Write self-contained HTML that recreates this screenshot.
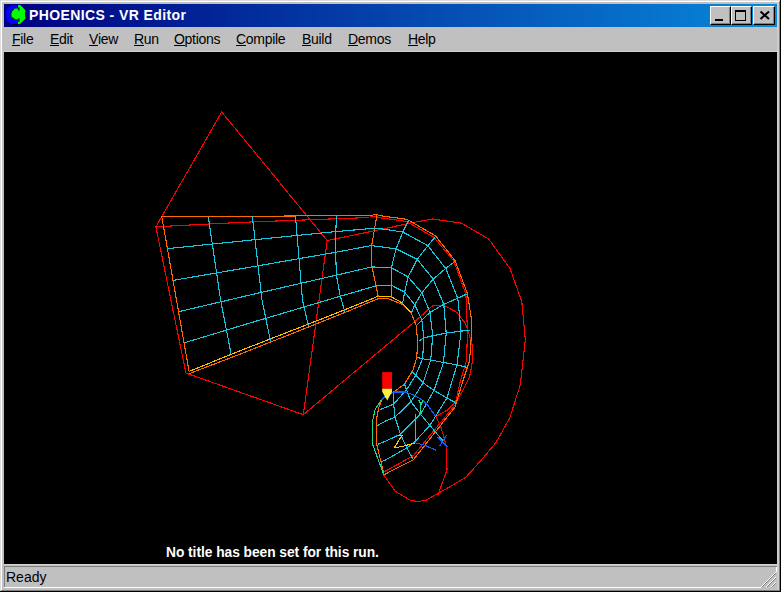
<!DOCTYPE html>
<html><head><meta charset="utf-8">
<style>
*{margin:0;padding:0;box-sizing:border-box}
html,body{width:781px;height:592px;overflow:hidden;background:#c0c0c0;font-family:"Liberation Sans",sans-serif}
.win{position:absolute;left:0;top:0;width:781px;height:592px;background:#c0c0c0}
.fr{position:absolute}
#title{position:absolute;left:4px;top:4px;width:773px;height:23px;background:linear-gradient(to right,#000080,#0888dc)}
#ttext{position:absolute;left:25px;top:4px;color:#fff;font-weight:bold;font-size:14px;letter-spacing:0.4px;line-height:14px;white-space:nowrap}
.menu{position:absolute;top:32px;font-size:14px;letter-spacing:-0.3px;line-height:14px;color:#000;white-space:nowrap}
.menu u{text-decoration:none;position:relative}
.menu u:after{content:"";position:absolute;left:0;right:0;top:14px;height:1px;background:#000}
#canvas{position:absolute;left:4px;top:52px;width:773px;height:512px;background:#000}
#msg{position:absolute;left:166px;top:546px;color:#fff;font-weight:bold;font-size:13.8px;letter-spacing:-0.05px;line-height:14px;white-space:nowrap}
#ready{position:absolute;left:6px;top:570px;font-size:14px;line-height:14px;white-space:nowrap;color:#000}
.btn{position:absolute;top:6px;height:18px;background:#c0c0c0;border-top:1px solid #fff;border-left:1px solid #fff;border-right:1px solid #000;border-bottom:1px solid #000;box-shadow:inset -1px -1px 0 #808080}
</style></head><body>
<div class="win">
  <div class="fr" style="left:0;top:0;width:781px;height:1px;background:#dcdcdc"></div>
  <div class="fr" style="left:0;top:0;width:1px;height:592px;background:#dcdcdc"></div>
  <div class="fr" style="left:1px;top:1px;width:778px;height:1px;background:#fff"></div>
  <div class="fr" style="left:1px;top:1px;width:1px;height:589px;background:#fff"></div>
  <div class="fr" style="left:777px;top:2px;width:2px;height:588px;background:#cccccc"></div>
  <div class="fr" style="left:779px;top:1px;width:1px;height:590px;background:#808080"></div>
  <div class="fr" style="left:1px;top:590px;width:779px;height:1px;background:#808080"></div>
  <div class="fr" style="left:780px;top:0;width:1px;height:592px;background:#000"></div>
  <div class="fr" style="left:0;top:591px;width:781px;height:1px;background:#000"></div>
  <div id="title">
    <svg width="24" height="24" viewBox="0 0 592 592" style="position:absolute;left:0;top:0">
      <polygon points="180,30 335,30 345,110 250,120 195,160 165,230 165,300 190,340 250,370 345,380 340,495 190,495 130,450 80,400 45,330 45,200 60,150 90,90" fill="#0000ff"/>
      <polygon points="345,25 400,25 470,90 520,150 535,200 540,330 520,370 470,420 400,490 345,500 345,440 375,390 345,380 250,370 190,340 165,300 165,230 195,160 250,120 345,110 375,150 345,60" fill="#00ff00"/>
      <polyline points="250,128 198,165 170,230 170,300 195,336 250,364" fill="none" stroke="#000" stroke-width="24"/>
      <path d="M368,85 L368,160 M368,350 L368,440 M220,505 L330,505 M300,35 L345,35 M530,200 L540,330" stroke="#000" stroke-width="26" fill="none"/>
    </svg>
    <div id="ttext">PHOENICS - VR Editor</div>
    <div class="btn" style="left:706px;width:21px;top:2px;height:19px">
      <div style="position:absolute;left:4px;top:12px;width:8px;height:2px;background:#000"></div>
    </div>
    <div class="btn" style="left:727px;width:21px;top:2px;height:19px">
      <div style="position:absolute;left:3px;top:3px;width:11px;height:11px;border:1px solid #000;border-top:2px solid #000"></div>
    </div>
    <div class="btn" style="left:749px;width:22px;top:2px;height:19px">
      <svg width="20" height="16" style="position:absolute;left:0;top:0"><path d="M6.5,4.5 L15,12 M15,4.5 L6.5,12" stroke="#000" stroke-width="2" fill="none"/></svg>
    </div>
  </div>
  <div class="menu" style="left:12px"><u>F</u>ile</div>
  <div class="menu" style="left:50px"><u>E</u>dit</div>
  <div class="menu" style="left:89px"><u>V</u>iew</div>
  <div class="menu" style="left:134px"><u>R</u>un</div>
  <div class="menu" style="left:174px"><u>O</u>ptions</div>
  <div class="menu" style="left:236px"><u>C</u>ompile</div>
  <div class="menu" style="left:302px"><u>B</u>uild</div>
  <div class="menu" style="left:348px"><u>D</u>emos</div>
  <div class="menu" style="left:408px"><u>H</u>elp</div>
  <div class="fr" style="left:3px;top:51px;width:775px;height:1px;background:#d0d0d0"></div>
  <div id="canvas"></div>
<svg id="wire" width="781" height="592" viewBox="0 0 781 592" style="position:absolute;left:0;top:0">
<polyline points="155.9,226.8 221.7,112.0 327.2,240.6 303.3,414.7 185.9,373.0 155.9,226.8" fill="none" stroke="#ff0000" stroke-width="1.1" stroke-linejoin="round" shape-rendering="crispEdges"/>
<polyline points="155.9,226.8 209.0,224.0 250.0,222.0 290.0,220.5 369.5,217.5 370.5,216.5 377.0,216.5 378.0,217.5 406.5,221.4 434.0,237.4 453.7,260.9 465.9,294.3 467.5,332.2 466.5,360.6 460.4,380.9 455.0,405.0 413.4,455.6 383.2,472.4" fill="none" stroke="#ff0000" stroke-width="1.1" stroke-linejoin="round" shape-rendering="crispEdges"/>
<polyline points="327.2,240.6 390.0,227.5 411.4,222.8 432.7,219.0 461.5,223.2 488.7,239.0 510.0,268.6 521.8,301.7 525.3,340.0 520.3,384.7 509.7,418.1 496.0,442.5 480.8,460.7 465.6,477.4 450.4,486.5 436.7,494.1 426.1,500.2 418.0,501.5 410.6,500.5 395.4,491.4 383.0,474.0" fill="none" stroke="#ff0000" stroke-width="1.1" stroke-linejoin="round" shape-rendering="crispEdges"/>
<polyline points="303.3,414.7 414.3,322.0 432.7,305.6 443.7,305.2 456.8,312.3 465.0,323.0 468.6,332.4 472.6,346.4 472.6,360.6 469.6,376.8 462.5,391.0 455.5,402.4 447.4,410.0 435.7,416.6 440.8,426.8 444.1,437.8 446.5,447.3 447.0,469.8 438.2,494.1 436.7,494.1" fill="none" stroke="#ff0000" stroke-width="1.1" stroke-linejoin="round" shape-rendering="crispEdges"/>
<polyline points="189.2,371.9 161.8,216.9 250.0,216.4 340.0,215.5 372.8,215.5 373.5,214.5 377.5,214.5 378.5,215.5 406.9,219.3 435.5,235.8 455.2,260.9 467.4,293.6 471.6,320.0 471.6,332.0 469.6,360.6 463.5,378.8 455.0,407.1 413.4,459.7 384.0,474.7" fill="none" stroke="#ff6a00" stroke-width="1.1" stroke-linejoin="round" shape-rendering="crispEdges"/>
<polyline points="189.2,373.6 240.0,354.2 340.0,314.5 379.0,298.3 388.0,298.6 402.4,304.3 411.3,313.4 416.0,324.8 417.6,340.8 416.8,357.5 413.0,370.0 404.5,384.2 395.4,390.8 388.3,394.8 382.2,399.4 379.1,406.5 377.1,415.6 376.1,428.0 376.4,442.8 384.0,474.7" fill="none" stroke="#ff6a00" stroke-width="1.1" stroke-linejoin="round" shape-rendering="crispEdges"/>
<polyline points="189.5,371.2 240.0,350.8 340.0,311.7 378.0,296.3 391.2,296.8 402.2,302.9 410.6,312.3" fill="none" stroke="#ffc000" stroke-width="1.1" stroke-linejoin="round" shape-rendering="crispEdges"/>
<polyline points="377.0,214.5 371.2,248.6 372.0,266.9 378.3,296.7" fill="none" stroke="#ff6a00" stroke-width="1.1" stroke-linejoin="round" shape-rendering="crispEdges"/>
<polyline points="208.3,217.0 220.6,300.0 231.0,353.5" fill="none" stroke="#18c8e0" stroke-width="1.1" stroke-linejoin="round" shape-rendering="crispEdges"/>
<polyline points="252.3,216.0 262.0,300.0 270.4,340.7" fill="none" stroke="#18c8e0" stroke-width="1.1" stroke-linejoin="round" shape-rendering="crispEdges"/>
<polyline points="295.4,215.5 302.5,300.0 308.4,326.3" fill="none" stroke="#18c8e0" stroke-width="1.1" stroke-linejoin="round" shape-rendering="crispEdges"/>
<polyline points="336.4,215.6 335.4,245.0 336.4,275.0 340.1,295.5 344.7,311.5" fill="none" stroke="#18c8e0" stroke-width="1.1" stroke-linejoin="round" shape-rendering="crispEdges"/>
<polyline points="167.7,248.6 250.0,240.2 340.0,231.2 376.5,228.1" fill="none" stroke="#18c8e0" stroke-width="1.1" stroke-linejoin="round" shape-rendering="crispEdges"/>
<polyline points="174.2,280.2 250.0,267.2 340.0,251.5 371.2,245.6" fill="none" stroke="#18c8e0" stroke-width="1.1" stroke-linejoin="round" shape-rendering="crispEdges"/>
<polyline points="179.0,311.6 250.0,295.0 340.0,274.3 372.0,266.9" fill="none" stroke="#18c8e0" stroke-width="1.1" stroke-linejoin="round" shape-rendering="crispEdges"/>
<polyline points="184.6,342.7 250.0,323.0 340.0,296.3 378.0,285.3" fill="none" stroke="#18c8e0" stroke-width="1.1" stroke-linejoin="round" shape-rendering="crispEdges"/>
<polyline points="408.9,219.9 402.8,232.0 396.0,248.8 391.4,267.8 391.4,285.3 391.7,297.9" fill="none" stroke="#18c8e0" stroke-width="1.1" stroke-linejoin="round" shape-rendering="crispEdges"/>
<polyline points="435.5,236.6 427.9,245.7 417.2,259.4 408.1,276.9 404.6,292.2 402.5,304.0" fill="none" stroke="#18c8e0" stroke-width="1.1" stroke-linejoin="round" shape-rendering="crispEdges"/>
<polyline points="455.2,261.2 445.7,268.5 433.2,279.1 421.8,292.8 414.8,304.8 411.3,313.4" fill="none" stroke="#18c8e0" stroke-width="1.1" stroke-linejoin="round" shape-rendering="crispEdges"/>
<polyline points="467.5,293.7 457.8,298.2 443.8,304.3 430.0,312.4 421.8,320.0 416.8,325.3" fill="none" stroke="#18c8e0" stroke-width="1.1" stroke-linejoin="round" shape-rendering="crispEdges"/>
<polyline points="470.5,330.4 461.1,331.1 446.2,333.1 432.7,335.8 423.9,337.8 419.0,341.0" fill="none" stroke="#18c8e0" stroke-width="1.1" stroke-linejoin="round" shape-rendering="crispEdges"/>
<polyline points="467.8,367.6 457.0,364.9 443.5,362.5 430.7,360.0 422.6,358.8 417.2,357.4" fill="none" stroke="#18c8e0" stroke-width="1.1" stroke-linejoin="round" shape-rendering="crispEdges"/>
<polyline points="455.5,402.6 446.9,398.0 434.0,390.5 423.1,382.8 415.7,375.3 411.8,371.4" fill="none" stroke="#18c8e0" stroke-width="1.1" stroke-linejoin="round" shape-rendering="crispEdges"/>
<polyline points="376.5,228.1 402.8,232.0 427.9,245.7 445.7,268.5 457.8,298.2 461.1,331.1 457.0,364.9 446.9,398.0" fill="none" stroke="#18c8e0" stroke-width="1.1" stroke-linejoin="round" shape-rendering="crispEdges"/>
<polyline points="371.2,245.6 396.0,248.8 417.2,259.4 433.2,279.1 443.8,304.3 446.2,333.1 443.5,362.5 434.0,390.5" fill="none" stroke="#18c8e0" stroke-width="1.1" stroke-linejoin="round" shape-rendering="crispEdges"/>
<polyline points="372.0,266.9 391.4,267.8 408.1,276.9 421.8,292.8 430.0,312.4 432.7,335.8 430.7,360.0 423.1,382.8" fill="none" stroke="#18c8e0" stroke-width="1.1" stroke-linejoin="round" shape-rendering="crispEdges"/>
<polyline points="378.0,285.3 391.4,285.3 404.6,292.2 414.8,304.8 421.8,320.0 423.9,337.8 422.6,358.8 415.7,375.3" fill="none" stroke="#18c8e0" stroke-width="1.1" stroke-linejoin="round" shape-rendering="crispEdges"/>
<polyline points="415.7,375.3 406.5,389.8 393.7,404.0 385.0,407.7 380.2,409.5" fill="none" stroke="#18c8e0" stroke-width="1.1" stroke-linejoin="round" shape-rendering="crispEdges"/>
<polyline points="423.1,382.8 411.0,401.8 395.0,417.1 385.0,421.3 377.1,425.8" fill="none" stroke="#18c8e0" stroke-width="1.1" stroke-linejoin="round" shape-rendering="crispEdges"/>
<polyline points="434.0,390.5 420.5,414.2 400.4,434.3 385.0,441.4 377.9,444.3" fill="none" stroke="#18c8e0" stroke-width="1.1" stroke-linejoin="round" shape-rendering="crispEdges"/>
<polyline points="446.9,398.0 429.9,425.4 414.6,442.0 406.9,447.9 385.0,460.3 381.0,461.8" fill="none" stroke="#18c8e0" stroke-width="1.1" stroke-linejoin="round" shape-rendering="crispEdges"/>
<polyline points="404.5,384.2 406.5,389.8 411.0,401.8 420.5,414.2 429.9,425.4 442.9,440.8" fill="none" stroke="#18c8e0" stroke-width="1.1" stroke-linejoin="round" shape-rendering="crispEdges"/>
<polyline points="393.8,392.3 393.7,404.0 395.0,417.1 400.4,434.3 406.9,447.9 412.8,459.1" fill="none" stroke="#18c8e0" stroke-width="1.1" stroke-linejoin="round" shape-rendering="crispEdges"/>
<polyline points="380.5,400.8 387.3,394.0 394.0,392.0 405.5,392.0 414.6,395.4 422.2,400.0 428.0,405.5 435.3,416.0" fill="none" stroke="#1060ff" stroke-width="1.1" stroke-linejoin="round" shape-rendering="crispEdges"/>
<polyline points="414.6,442.6 424.0,445.0 436.4,450.3" fill="none" stroke="#1060ff" stroke-width="1.1" stroke-linejoin="round" shape-rendering="crispEdges"/>
<polyline points="446.5,435.5 439.5,446.5" fill="none" stroke="#1060ff" stroke-width="1.1" stroke-linejoin="round" shape-rendering="crispEdges"/>
<polyline points="437.5,437.0 447.5,447.0" fill="none" stroke="#1060ff" stroke-width="1.1" stroke-linejoin="round" shape-rendering="crispEdges"/>
<polyline points="381.2,400.1 375.1,409.6 372.4,421.8 372.6,444.3 383.2,473.2" fill="none" stroke="#20d890" stroke-width="1.1" stroke-linejoin="round" shape-rendering="crispEdges"/>
<polyline points="415.5,414.2 415.5,440.8" fill="none" stroke="#20d890" stroke-width="1.1" stroke-linejoin="round" shape-rendering="crispEdges"/>
<polyline points="418.7,400.0 421.0,404.7 420.5,413.0" fill="none" stroke="#20d890" stroke-width="1.1" stroke-linejoin="round" shape-rendering="crispEdges"/>
<polyline points="421.0,404.7 423.0,400.5" fill="none" stroke="#20d890" stroke-width="1.1" stroke-linejoin="round" shape-rendering="crispEdges"/>
<polyline points="398.0,435.5 402.1,435.5 394.0,447.9 402.0,446.5 414.6,443.2" fill="none" stroke="#ffc000" stroke-width="1.1" stroke-linejoin="round" shape-rendering="crispEdges"/>
<rect x="382.2" y="372.1" width="9.8" height="16.7" fill="#ff0000"/>
<polygon points="382.2,388.8 392,388.8 392,391.8 387.3,400.4 382.2,391.8" fill="#f8f040"/>
</svg>
  <div id="msg">No title has been set for this run.</div>
  <div class="fr" style="left:4px;top:564px;width:773px;height:1px;background:#d4d4d4"></div>
  <div class="fr" style="left:4px;top:566px;width:773px;height:1px;background:#808080"></div>
  <div class="fr" style="left:4px;top:566px;width:1px;height:21px;background:#808080"></div>
  <div class="fr" style="left:4px;top:587px;width:757px;height:1px;background:#fff"></div>
  <div class="fr" style="left:776px;top:567px;width:1px;height:5px;background:#fff"></div>
  <svg width="17" height="17" style="position:absolute;left:760px;top:571px" shape-rendering="crispEdges">
    <path d="M1,16 L16,1" stroke="#fff" stroke-width="1.2"/>
    <path d="M2,16 L16,2" stroke="#808080" stroke-width="1.2"/>
    <path d="M6,16 L16,6" stroke="#fff" stroke-width="1.2"/>
    <path d="M7,16 L16,7" stroke="#808080" stroke-width="1.2"/>
    <path d="M11,16 L16,11" stroke="#fff" stroke-width="1.2"/>
    <path d="M12,16 L16,12" stroke="#808080" stroke-width="1.2"/>
  </svg>
  <div id="ready">Ready</div>
</div>
</body></html>
